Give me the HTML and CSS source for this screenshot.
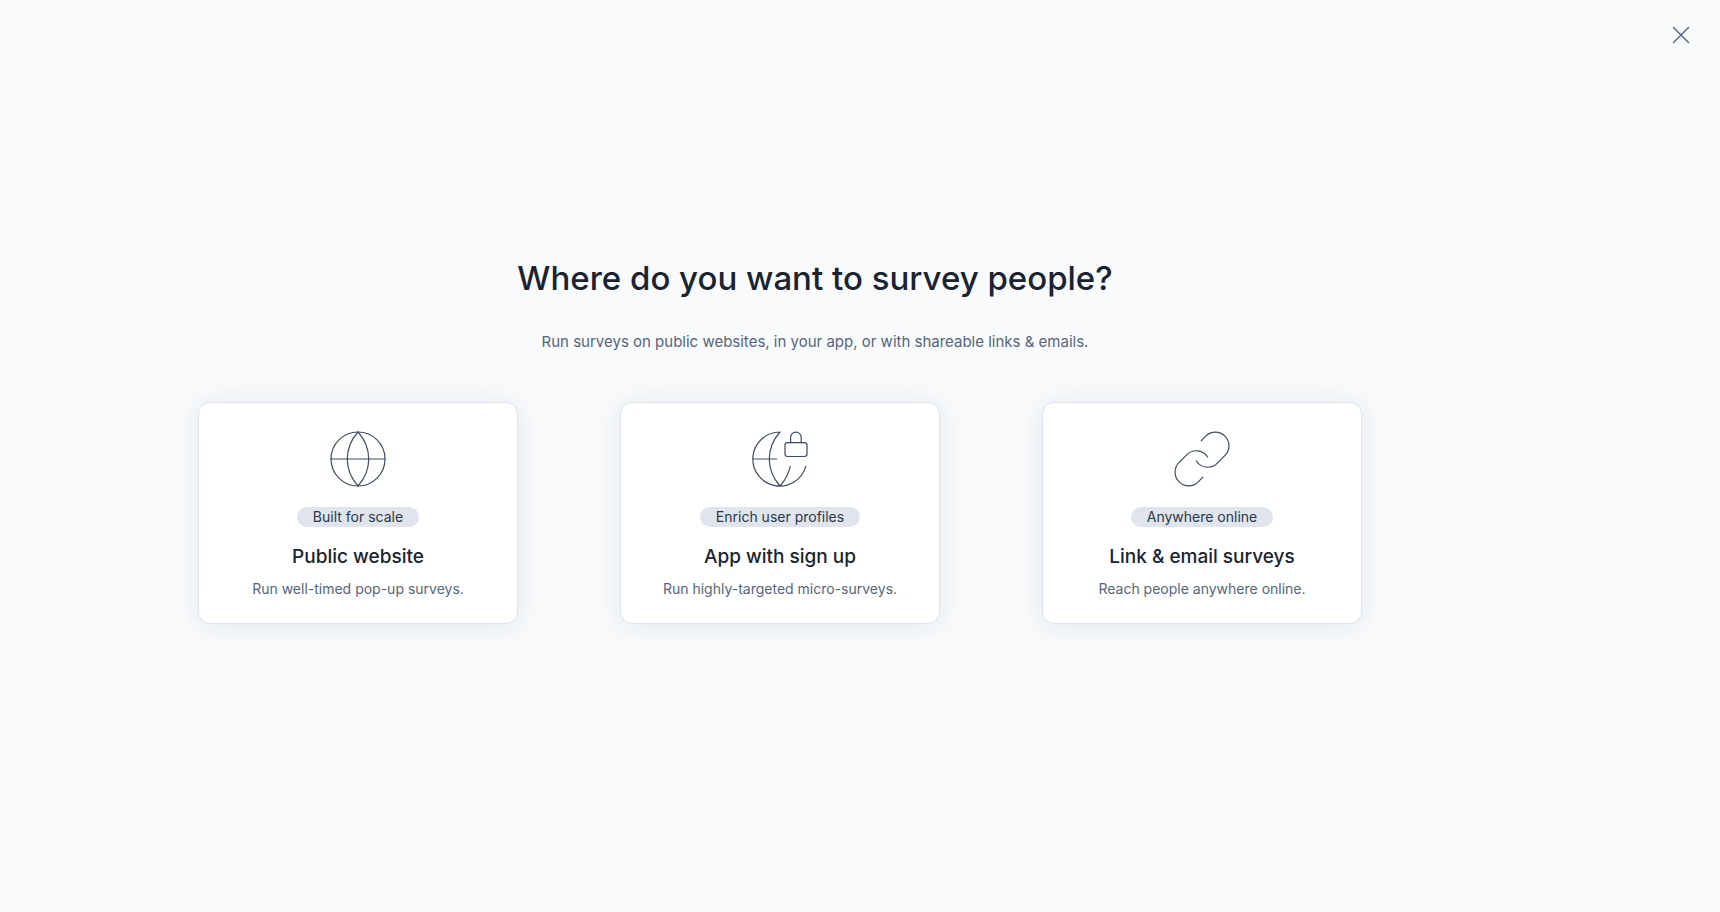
FILE: index.html
```html
<!DOCTYPE html>
<html lang="en">
<head>
<meta charset="utf-8">
<meta name="viewport" content="width=device-width, initial-scale=1">
<title>Where do you want to survey people?</title>
<link rel="stylesheet" href="styles.css">
</head>
<body>
<div class="page">
  <button class="close" type="button" aria-label="Close">
    <svg class="close-icon" viewBox="0 0 18 18" aria-hidden="true"><path d="M1.5 1.5l15 15M16.5 1.5l-15 15"/></svg>
  </button>
  <main class="content">
    <header class="intro">
      <h1 class="heading">Where do you want to survey people?</h1>
      <p class="lead">Run surveys on public websites, in your app, or with shareable links &amp; emails.</p>
    </header>
    <div class="options">
      <button class="card" type="button">
        <svg class="icon" viewBox="0 0 56 56" aria-hidden="true">
          <circle cx="28" cy="28" r="27"/>
          <path d="M1 28H55M28 1C13.7 17 13.7 39 28 55C42.3 39 42.3 17 28 1"/>
        </svg>
        <span class="pill">Built for scale</span>
        <span class="title">Public website</span>
        <span class="text">Run well-timed pop-up surveys.</span>
      </button>
      <button class="card" type="button">
        <svg class="icon" viewBox="0 0 56 56" aria-hidden="true">
          <path d="M28 1A27 27 0 1 0 53.8 35.3M28 1C13.7 17 13.7 39 28 55C33 49.5 36.6 42.6 38.3 35.3M1 28H24.7"/>
          <rect x="33" y="11.7" width="22" height="13.8" rx="2.4"/>
          <path d="M38.6 11.7V6.4a5.3 5.3 0 0 1 10.6 0v5.3"/>
        </svg>
        <span class="pill">Enrich user profiles</span>
        <span class="title">App with sign up</span>
        <span class="text">Run highly-targeted micro-surveys.</span>
      </button>
      <button class="card" type="button">
        <svg class="icon" viewBox="0 0 56 56" aria-hidden="true">
          <path d="M27.2 9.9L31.7 5.2A13.6 13.6 0 0 1 51 24.4L43.9 31.7A13.6 13.6 0 0 1 22.3 30"/>
          <path d="M28.8 46.1L24.3 50.8A13.6 13.6 0 0 1 5 31.6L12.1 24.3A13.6 13.6 0 0 1 33.7 26"/>
        </svg>
        <span class="pill">Anywhere online</span>
        <span class="title">Link &amp; email surveys</span>
        <span class="text">Reach people anywhere online.</span>
      </button>
    </div>
  </main>
</div>
</body>
</html>
```
FILE: styles.css
```css
* { box-sizing: border-box; }

body {
  margin: 0;
  background: #f8fafc;
  color: #1e293b;
  font-family: Inter, "Liberation Sans", sans-serif;
}

button {
  font: inherit;
  color: inherit;
  cursor: pointer;
}

.page {
  position: relative;
  display: flex;
  align-items: center;
  justify-content: center;
  min-height: 100vh;
  padding: 64px 90px 94px 0;
}

.close {
  position: absolute;
  top: 18px;
  right: 22px;
  display: grid;
  place-items: center;
  width: 34px;
  height: 34px;
  padding: 0;
  border: 0;
  background: transparent;
}

.close-icon {
  width: 18px;
  height: 18px;
  fill: none;
  stroke: #5b6b82;
  stroke-width: 1.5;
  stroke-linecap: round;
}

.content {
  display: flex;
  flex-direction: column;
  gap: 48px;
  width: 100%;
  max-width: 1234px;
}

.intro {
  display: flex;
  flex-direction: column;
  gap: 32px;
  text-align: center;
}

.heading {
  margin: 0;
  font-size: 33px;
  line-height: 40px;
  font-weight: 500;
  color: #1a2332;
}

.lead {
  margin: 0;
  font-size: 15px;
  line-height: 24px;
  color: #56657c;
}

.options {
  display: grid;
  grid-template-columns: repeat(3, 1fr);
  gap: 32px;
}

.card {
  display: flex;
  flex-direction: column;
  align-items: center;
  width: 100%;
  max-width: 320px;
  padding: 28px 24px 24px;
  border: 1px solid #dde3ef;
  border-radius: 12px;
  background: #fff;
  box-shadow: 0 2px 28px rgba(30, 41, 59, 0.09);
}

.icon {
  width: 56px;
  height: 56px;
  fill: none;
  stroke: #3f4c61;
  stroke-width: 1.2;
  stroke-linecap: round;
  stroke-linejoin: round;
}

.pill {
  margin-top: 20px;
  padding: 0 16px;
  border-radius: 10px;
  background: #e0e4ed;
  font-size: 14px;
  line-height: 20px;
  color: #2b374b;
}

.title {
  margin-top: 16px;
  font-size: 19px;
  line-height: 28px;
  font-weight: 500;
  color: #1a2332;
}

.text {
  margin-top: 8px;
  font-size: 14px;
  line-height: 20px;
  color: #56657c;
}
```
